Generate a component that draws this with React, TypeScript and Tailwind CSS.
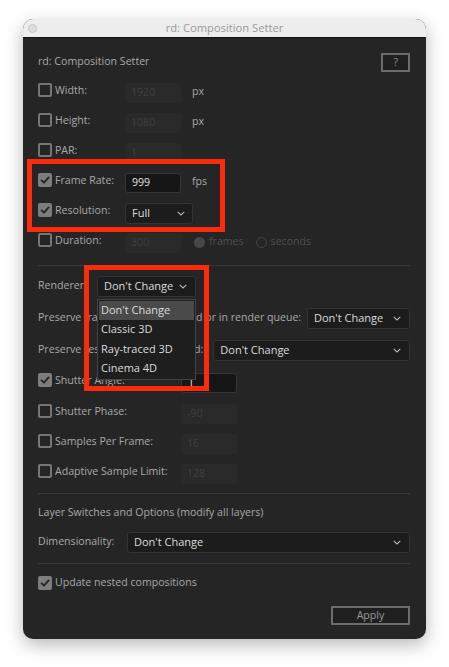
import React from "react";

function Check({ checked }: { checked?: boolean }) {
  if (checked) {
    return (
      <span className="w-[14px] h-[14px] rounded-[2px] bg-[#7d7d7d] flex items-center justify-center shrink-0">
        <svg width="10" height="10" viewBox="0 0 10 10">
          <path d="M1.6 5.3 L4 7.7 L8.6 2.4" stroke="#262626" strokeWidth="1.9" fill="none" strokeLinecap="round" strokeLinejoin="round" />
        </svg>
      </span>
    );
  }
  return <span className="w-[14px] h-[14px] rounded-[2px] border-2 border-[#767676] shrink-0" />;
}

function Field({ value, active, w = "w-[56px]" }: { value: string; active?: boolean; w?: string }) {
  return (
    <div
      className={
        active
          ? `${w} h-[20px] rounded-[3px] bg-[#161616] border border-[#363636] flex items-center pl-[6px] text-[#e2e2e2] mt-[2px]`
          : `${w} h-[20px] rounded-[3px] bg-[#2a2a2a] flex items-center pl-[6px] text-[#3f3f3f] mt-[2px]`
      }
    >
      {value}
    </div>
  );
}

function Chevron() {
  return (
    <svg width="8" height="5" viewBox="0 0 8 5" className="shrink-0">
      <path d="M0.7 0.8 L4 4 L7.3 0.8" stroke="#b5b5b5" strokeWidth="1.1" fill="none" />
    </svg>
  );
}

function Select({ value, cls }: { value: string; cls: string }) {
  return (
    <div className={`${cls} h-[21px] rounded-[3px] bg-[#1c1c1c] border border-[#333] flex items-center justify-between pl-[6px] pr-[8px] text-[#dcdcdc] text-[11px]`}>
      <span>{value}</span>
      <Chevron />
    </div>
  );
}

function CheckLabel({ checked, label, w }: { checked?: boolean; label: string; w: string }) {
  return (
    <div className={`${w} flex items-center gap-[3px] mb-[3px] shrink-0 whitespace-nowrap`}>
      <Check checked={checked} />
      <span>{label}</span>
    </div>
  );
}

function Sep({ cls }: { cls: string }) {
  return <div className={`${cls} h-px bg-[#383838]`} />;
}

export default function App() {
  return (
    <div className="w-[449px] h-[667px] bg-white pt-[19px] pl-[23px] font-['Open_Sans',sans-serif] text-[10.6px] text-[#a9a9a9]">
      <div className="relative w-[403px] h-[620px] rounded-[10px] bg-[#252525] shadow-[0_6px_18px_rgba(0,0,0,0.28)] overflow-hidden flex flex-col">
        {/* Title bar */}
        <div className="h-[19px] bg-[#ededed] border-b border-[#111] flex items-center relative shrink-0">
          <span className="absolute left-[5px] top-[5px] w-[9px] h-[9px] rounded-full bg-[#dedede] border border-[#c6c6c6]" />
          <div className="w-full text-center text-[11.2px] text-[#9b9b9b]">rd: Composition Setter</div>
        </div>

        <div className="pl-[15px] pr-[16px] flex flex-col">
          {/* Header */}
          <div className="mt-[14px] h-[20px] flex items-center justify-between">
            <span>rd: Composition Setter</span>
            <div className="w-[29px] h-[19px] border-2 border-[#6c6c6c] bg-[#1f1f1f] flex items-center justify-center text-[#8a8a8a] text-[11px]">?</div>
          </div>

          <div className="mt-[5px] flex flex-col">
            <div className="flex items-center h-[30px]">
              <CheckLabel label="Width:" w="w-[87px]" />
              <Field value="1920" />
              <span className="ml-[11px]">px</span>
            </div>
            <div className="flex items-center h-[30px]">
              <CheckLabel label="Height:" w="w-[87px]" />
              <Field value="1080" />
              <span className="ml-[11px]">px</span>
            </div>
            <div className="flex items-center h-[30px]">
              <CheckLabel label="PAR:" w="w-[87px]" />
              <Field value="1" />
            </div>
            <div className="flex items-center h-[30px]">
              <CheckLabel checked label="Frame Rate:" w="w-[87px]" />
              <Field value="999" active />
              <span className="ml-[11px]">fps</span>
            </div>
            <div className="flex items-center h-[30px]">
              <CheckLabel checked label="Resolution:" w="w-[87px]" />
              <div className="mt-[2px] w-[68px] h-[21px] rounded-[3px] bg-[#1c1c1c] border border-[#333] flex items-center justify-between pl-[6px] pr-[7px] text-[#dcdcdc] text-[11px]">
                <span>Full</span>
                <Chevron />
              </div>
            </div>
            <div className="flex items-center h-[30px]">
              <CheckLabel label="Duration:" w="w-[87px]" />
              <Field value="300" />
              <span className="ml-[13px] w-[11px] h-[11px] rounded-full bg-[#474747]" />
              <span className="ml-[4px] text-[#4f4f4f]">frames</span>
              <span className="ml-[12px] w-[11px] h-[11px] rounded-full border border-[#474747]" />
              <span className="ml-[4px] text-[#4f4f4f]">seconds</span>
            </div>
          </div>

          <Sep cls="mt-[8px]" />

          <div className="mt-[4px] flex flex-col">
            <div className="flex items-center h-[32px]">
              <span className="w-[59px] shrink-0">Renderer:</span>
              <Select value="Don't Change" cls="w-[99px]" />
            </div>
            <div className="flex items-center h-[32px] justify-between">
              <span className="whitespace-nowrap">Preserve frame rate when nested or in render queue:</span>
              <Select value="Don't Change" cls="w-[103px] shrink-0" />
            </div>
            <div className="flex items-center h-[32px] gap-[10px]">
              <span className="shrink-0 whitespace-nowrap">Preserve resolution when nested:</span>
              <Select value="Don't Change" cls="flex-1" />
            </div>
            <div className="flex items-center h-[32px]">
              <CheckLabel checked label="Shutter Angle:" w="w-[143px]" />
              <Field value="1" active />
            </div>
            <div className="flex items-center h-[30px]">
              <CheckLabel label="Shutter Phase:" w="w-[143px]" />
              <Field value="-90" />
            </div>
            <div className="flex items-center h-[30px]">
              <CheckLabel label="Samples Per Frame:" w="w-[143px]" />
              <Field value="16" />
            </div>
            <div className="flex items-center h-[30px]">
              <CheckLabel label="Adaptive Sample Limit:" w="w-[143px]" />
              <Field value="128" />
            </div>
          </div>

          <Sep cls="mt-[5px]" />

          <div className="mt-[5px] h-[28px] flex items-center">Layer Switches and Options (modify all layers)</div>
          <div className="h-[30px] flex items-center">
            <span className="w-[89px] shrink-0">Dimensionality:</span>
            <Select value="Don't Change" cls="flex-1" />
          </div>

          <Sep cls="mt-[6px]" />

          <div className="mt-[4px] h-[30px] flex items-center">
            <div className="flex items-center gap-[3px]">
              <Check checked />
              <span>Update nested compositions</span>
            </div>
          </div>

          <div className="mt-[8px] flex justify-end">
            <div className="w-[79px] h-[19px] border-2 border-[#6c6c6c] bg-[#1f1f1f] flex items-center justify-center text-[#9a9a9a]">Apply</div>
          </div>
        </div>

        {/* Dropdown menu overlay */}
        <div className="absolute left-[74px] top-[280px] w-[99px] h-[81px] bg-[#1e1e1e] border border-[#444] flex flex-col p-[1px] text-[#dcdcdc] text-[11px]">
          <div className="h-[19px] bg-[#4a4a4a] flex items-center pl-[2px]">Don't Change</div>
          <div className="h-[20px] flex items-center pl-[2px]">Classic 3D</div>
          <div className="h-[20px] flex items-center pl-[2px]">Ray-traced 3D</div>
          <div className="h-[20px] flex items-center pl-[2px]">Cinema 4D</div>
        </div>

        {/* Red highlight boxes */}
        <div className="absolute left-[4px] top-[140px] w-[198px] h-[73px] border-[5px] border-[#fb2c0c]" />
        <div className="absolute left-[61px] top-[246px] w-[125px] h-[126px] border-[5px] border-[#fb2c0c]" />
      </div>
    </div>
  );
}
